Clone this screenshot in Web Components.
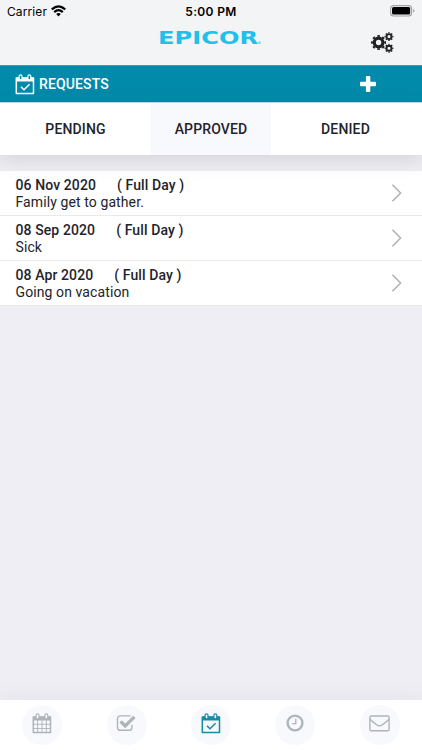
<!DOCTYPE html>
<html lang="en">
<head>
<meta charset="utf-8">
<meta name="viewport" content="width=device-width, initial-scale=1">
<title>Requests</title>
<style>
    body {
        margin: 0;
        background: #efeef5;
        font-family: Roboto, sans-serif;
        color: #23232b;
    }
</style>
</head>
<body>
<requests-app></requests-app>
<script>
const calendarTop = `
    <path d="M2 4H18.5V19.6H1.3V4Z" fill="none" stroke="currentColor" stroke-width="1.5" stroke-linejoin="round"/>`;

const calendarRings = `
    <rect x="4.1" y=".9" width="2.9" height="5" rx="1.4" fill="var(--ring, #fff)" stroke="currentColor" stroke-width="1.2"/>
    <rect x="12.9" y=".9" width="2.9" height="5" rx="1.4" fill="var(--ring, #fff)" stroke="currentColor" stroke-width="1.2"/>`;

// one gear: solid ring plus a dashed ring for the eight teeth
function gear(x, y, r, ring, tooth) {
    const outer = r + ring / 2 + tooth / 2 - 0.2;
    return `
        <circle cx="${x}" cy="${y}" r="${r}" fill="none" stroke="currentColor" stroke-width="${ring}"/>
        <circle cx="${x}" cy="${y}" r="${outer}" fill="none" stroke="currentColor" stroke-width="${tooth}"
            pathLength="16" stroke-dasharray="1 1" stroke-dashoffset=".5"/>`;
}

const icons = {
    wifi: { w: 15, h: 12, body: `
        <g fill="none" stroke="currentColor" stroke-width="2.2">
            <path d="M.8 4.4Q7.5 -1.6 14.2 4.4"/>
            <path d="M3.2 7.1Q7.5 3.3 11.8 7.1"/>
        </g>
        <path d="M5.2 9Q7.5 7.1 9.8 9L7.5 11.4Z" fill="currentColor"/>` },
    battery: { w: 25, h: 12, body: `
        <rect x=".6" y=".6" width="21" height="10.4" rx="3" fill="none" stroke="#a0a1a3" stroke-width="1.1"/>
        <rect x="2" y="2" width="18.2" height="7.6" rx="1.6" fill="#000"/>
        <path d="M23.2 4V7.6Q24.5 7 24.5 5.8T23.2 4Z" fill="#a0a1a3"/>` },
    gears: { w: 23, h: 21, body:
        gear(7.6, 10.5, 4.3, 3.2, 1.8) + gear(18, 4.6, 2.5, 1.9, 1.2) + gear(18, 16.3, 2.5, 1.9, 1.2) },
    plus: { w: 16, h: 16, body: `
        <rect x="5.9" y="0" width="4.4" height="16" rx="1" fill="currentColor"/>
        <rect x="0" y="5.8" width="16" height="4.4" rx="1" fill="currentColor"/>` },
    calendarCheck: { w: 20, h: 21, body: calendarTop + `
        <path d="M1.3 3.6H18.7V7.5H1.3Z" fill="currentColor"/>` + calendarRings + `
        <path d="M6 12.9L9 15.8L14.6 10.3" fill="none" stroke="currentColor" stroke-width="1.5"/>` },
    calendar: { w: 20, h: 21, body: calendarTop + `
        <path d="M1.3 3.6H18.7V7.5H1.3Z" fill="currentColor"/>
        <path d="M5.6 7V19.5M10 7V19.5M14.4 7V19.5M1.3 11.3H18.7M1.3 15.5H18.7" stroke="currentColor" stroke-width=".9"/>` + calendarRings },
    checkSquare: { w: 22, h: 18, body: `
        <path d="M14.6 1.9H4.4Q1.5 1.9 1.5 4.8V13.4Q1.5 16.3 4.4 16.3H13Q15.9 16.3 15.9 13.4V10.8" fill="none" stroke="currentColor" stroke-width="1.4"/>
        <path d="M4.6 7.4L9.2 11.9L18.4 2.9" fill="none" stroke="currentColor" stroke-width="3.4"/>` },
    clock: { w: 19, h: 18, body: `
        <circle cx="9" cy="9" r="7.4" fill="none" stroke="currentColor" stroke-width="2.4"/>
        <path d="M9.8 4.8V9.6H6.2" fill="none" stroke="currentColor" stroke-width="1.3"/>` },
    mail: { w: 21, h: 17, body: `
        <rect x=".9" y="1" width="19.2" height="14.8" rx="1.4" fill="none" stroke="currentColor" stroke-width="1.4"/>
        <path d="M1 4.2Q4 7 7.6 9.8Q10.5 12 13.4 9.8Q17 7 20 4.2" fill="none" stroke="currentColor" stroke-width="1.4"/>` },
    chevron: { w: 11, h: 20, body: `
        <path d="M1.4 1.8L9.6 10L1.4 18.2" fill="none" stroke="currentColor" stroke-width="1.5"/>` },
};

function render(el, html) {
    const template = document.createElement("template");
    template.innerHTML = html;
    el.attachShadow({ mode: "open" }).appendChild(template.content.cloneNode(true));
}

class AppIcon extends HTMLElement {
    connectedCallback() {
        const icon = icons[this.getAttribute("name")];
        render(this, `
            <style>
                :host { display: block; flex: none; }
                svg { display: block; }
            </style>
            <svg width="${icon.w}" height="${icon.h}" viewBox="0 0 ${icon.w} ${icon.h}">${icon.body}</svg>
        `);
    }
}

class StatusBar extends HTMLElement {
    connectedCallback() {
        render(this, `
            <style>
                :host {
                    display: grid;
                    grid-template-columns: 1fr auto 1fr;
                    align-items: center;
                    height: 22px;
                    padding: 0 7px 0 7px;
                    font-family: Inter, sans-serif;
                    font-size: 12px;
                    color: #000;
                }
                .carrier { display: flex; align-items: center; gap: 4px; letter-spacing: .1px; }
                .carrier app-icon { margin-top: -1px; }
                .time { font-weight: 600; letter-spacing: .35px; }
                .battery { justify-self: end; margin-top: -1px; }
            </style>
            <div class="carrier"><span>Carrier</span><app-icon name="wifi"></app-icon></div>
            <span class="time">5:00 PM</span>
            <app-icon class="battery" name="battery"></app-icon>
        `);
    }
}

class BrandHeader extends HTMLElement {
    connectedCallback() {
        render(this, `
            <style>
                :host {
                    display: grid;
                    grid-template-columns: 1fr 106px 1fr;
                    height: 43px;
                }
                .logo { grid-column: 2; margin-top: 4px; display: block; overflow: visible; }
                .logo text { fill: #21c0ea; }
                .name { font-family: "DejaVu Sans", sans-serif; font-weight: 700; }
                .mark { font-family: Inter, sans-serif; }
                .gears { justify-self: end; margin: 10px 28px 0 0; color: #202124; }
            </style>
            <svg class="logo" width="106" height="26" viewBox="0 0 106 26">
                <text class="name" x="0" y="18" font-size="18" textLength="100" lengthAdjust="spacingAndGlyphs">EPICOR</text>
                <text class="mark" x="99.5" y="19" font-size="5">®</text>
            </svg>
            <app-icon class="gears" name="gears"></app-icon>
        `);
    }
}

class TitleBar extends HTMLElement {
    connectedCallback() {
        render(this, `
            <style>
                :host {
                    display: flex;
                    align-items: center;
                    box-sizing: border-box;
                    height: 37px;
                    padding: 0 46px 0 15px;
                    background: #028aaa;
                    border-top: 1px solid #3e9cb0;
                    color: #fff;
                    font-size: 14px;
                    font-weight: 500;
                    --ring: #028aaa;
                }
                .title { flex: 1; margin-left: 4px; letter-spacing: .12px; }
            </style>
            <app-icon name="calendarCheck"></app-icon>
            <span class="title"><slot></slot></span>
            <app-icon name="plus"></app-icon>
        `);
    }
}

class StatusTabs extends HTMLElement {
    connectedCallback() {
        render(this, `
            <style>
                :host {
                    display: grid;
                    grid-template-columns: 151px 120px 149px;
                    position: relative;
                    height: 52px;
                    border-top: 1px solid #b5dbe4;
                    background: #fff;
                    box-shadow: 0 5px 20px rgba(60, 60, 70, .15);
                }
                ::slotted(*) {
                    display: grid;
                    place-items: center;
                    padding-bottom: 1px;
                    font-size: 14px;
                    font-weight: 500;
                    letter-spacing: .15px;
                }
                ::slotted([selected]) { background: #f8f9fc; }
            </style>
            <slot></slot>
        `);
    }
}

class RequestItem extends HTMLElement {
    connectedCallback() {
        render(this, `
            <style>
                :host {
                    display: flex;
                    align-items: center;
                    box-sizing: border-box;
                    height: 45px;
                    padding: 0 20px 0 15.5px;
                    background: #fff;
                    border-bottom: 1px solid #e9e9ee;
                    font-size: 14px;
                    line-height: 17px;
                    letter-spacing: .1px;
                }
                .text { flex: 1; padding-top: 2px; }
                .head { display: flex; gap: 21px; font-weight: 500; }
                app-icon { color: #adb1b6; }
            </style>
            <div class="text">
                <div class="head"><span>${this.getAttribute("date")}</span><span>( ${this.getAttribute("length")} )</span></div>
                <div><slot></slot></div>
            </div>
            <app-icon name="chevron"></app-icon>
        `);
    }
}

class BottomNav extends HTMLElement {
    connectedCallback() {
        const active = this.getAttribute("active");
        const items = ["calendar", "checkSquare", "calendarCheck", "clock", "mail"];
        render(this, `
            <style>
                :host {
                    display: grid;
                    grid-template-columns: repeat(5, 1fr);
                    align-items: center;
                    justify-items: center;
                    height: 50px;
                    background: #fff;
                    box-shadow: 0 -3px 20px rgba(60, 60, 70, .06);
                    color: #adb4ba;
                }
                .item {
                    display: grid;
                    place-items: center;
                    box-sizing: border-box;
                    width: 40px;
                    height: 40px;
                    padding-bottom: 4px;
                    border-radius: 50%;
                    background: #f8f9fc;
                }
                .active { color: #168ba5; }
            </style>
            ${items.map(name => `<div class="item ${name === active ? "active" : ""}"><app-icon name="${name}"></app-icon></div>`).join("")}
        `);
    }
}

class RequestsApp extends HTMLElement {
    connectedCallback() {
        render(this, `
            <style>
                :host { display: flex; flex-direction: column; height: 750px; overflow: hidden; }
                header { background: #f3f4f6; }
                main { flex: 1; padding-top: 16px; }
                main, bottom-nav { position: relative; }
                main { z-index: -1; }
                main request-item { position: relative; }
            </style>
            <header>
                <status-bar></status-bar>
                <brand-header></brand-header>
            </header>
            <title-bar>REQUESTS</title-bar>
            <status-tabs>
                <span>PENDING</span>
                <span selected>APPROVED</span>
                <span>DENIED</span>
            </status-tabs>
            <main>
                <request-item date="06 Nov 2020" length="Full Day">Family get to gather.</request-item>
                <request-item date="08 Sep 2020" length="Full Day">Sick</request-item>
                <request-item date="08 Apr 2020" length="Full Day">Going on vacation</request-item>
            </main>
            <bottom-nav active="calendarCheck"></bottom-nav>
        `);
    }
}

customElements.define("app-icon", AppIcon);
customElements.define("status-bar", StatusBar);
customElements.define("brand-header", BrandHeader);
customElements.define("title-bar", TitleBar);
customElements.define("status-tabs", StatusTabs);
customElements.define("request-item", RequestItem);
customElements.define("bottom-nav", BottomNav);
customElements.define("requests-app", RequestsApp);
</script>
</body>
</html>
